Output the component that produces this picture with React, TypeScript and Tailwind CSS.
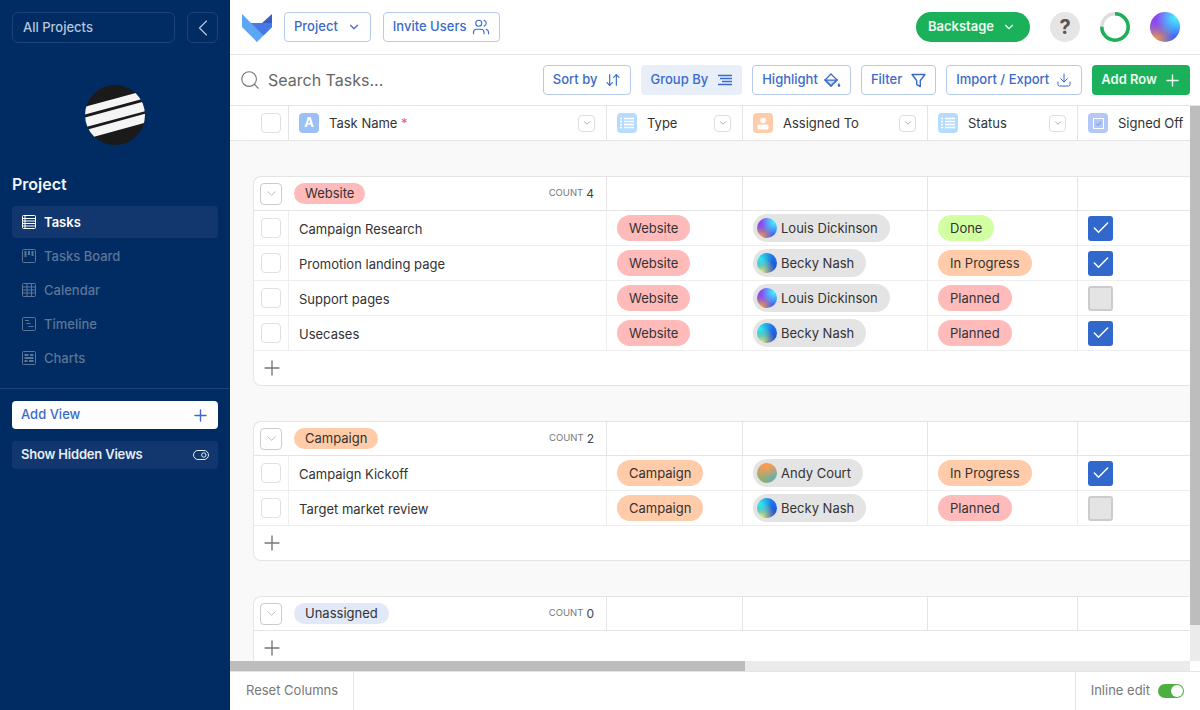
import { ChevronDown, ChevronLeft, Plus, Search, Users, ArrowDownUp, Download, Check } from "lucide-react";

const HEAD_COLS = "grid grid-cols-[59px_318px_136px_185px_150px_160px]";
const GROUP_COLS = "grid grid-cols-[35px_318px_136px_185px_150px_160px]";
const LOUIS = "bg-[radial-gradient(circle_at_85%_20%,#45f0ff_0%,transparent_55%),radial-gradient(circle_at_15%_15%,#9a3cf5_0%,transparent_60%),radial-gradient(circle_at_15%_90%,#ff9a3c_0%,transparent_55%),linear-gradient(#5a70f5,#3a5cff)]";
const BECKY = "bg-[radial-gradient(circle_at_15%_30%,#30f0e8_0%,transparent_55%),radial-gradient(circle_at_20%_95%,#e0f570_0%,transparent_60%),linear-gradient(#1f80f0,#2040c8)]";
const ANDY = "bg-[radial-gradient(circle_at_45%_5%,#ff9a50_0%,transparent_65%),radial-gradient(circle_at_90%_80%,#60b0b0_0%,transparent_60%),radial-gradient(circle_at_10%_90%,#98b060_0%,transparent_60%),linear-gradient(#d0a070,#a0a880)]";

const PILL: Record<string, string> = {
  Website: "bg-[#ffbaba]",
  Campaign: "bg-[#ffcba8]",
  Unassigned: "bg-[#e1e8f7]",
  Done: "bg-[#d3ffa3]",
  "In Progress": "bg-[#ffcba8]",
  Planned: "bg-[#ffbaba]",
};

const USERS: Record<string, string> = {
  "Louis Dickinson": LOUIS,
  "Becky Nash": BECKY,
  "Andy Court": ANDY,
};

type Row = { name: string; type: string; user: string; status: string; signed: boolean };

const GROUPS: { name: string; rows: Row[] }[] = [
  {
    name: "Website",
    rows: [
      { name: "Campaign Research", type: "Website", user: "Louis Dickinson", status: "Done", signed: true },
      { name: "Promotion landing page", type: "Website", user: "Becky Nash", status: "In Progress", signed: true },
      { name: "Support pages", type: "Website", user: "Louis Dickinson", status: "Planned", signed: false },
      { name: "Usecases", type: "Website", user: "Becky Nash", status: "Planned", signed: true },
    ],
  },
  {
    name: "Campaign",
    rows: [
      { name: "Campaign Kickoff", type: "Campaign", user: "Andy Court", status: "In Progress", signed: true },
      { name: "Target market review", type: "Campaign", user: "Becky Nash", status: "Planned", signed: false },
    ],
  },
  { name: "Unassigned", rows: [] },
];

function NavIcon({ kind }: { kind: string }) {
  return (
    <svg width="14" height="14" viewBox="0 0 14 14" fill="none" stroke="currentColor" strokeWidth="1" className="shrink-0">
      <rect x="0.5" y="0.5" width="13" height="13" rx="1" />
      {kind === "Tasks" && <path d="M0.5 3.5h13M0.5 6h13M0.5 8.5h13M0.5 11h13M3 0.5v13" />}
      {kind === "Tasks Board" && <path d="M3.5 2v6M7 2v4M10.5 2v5" strokeWidth="2" />}
      {kind === "Calendar" && <path d="M0.5 4h13M0.5 7h13M0.5 10h13M5 0.5v13M9.5 0.5v13" />}
      {kind === "Timeline" && <path d="M3 3.5h4M4.5 6.5h4M6.5 9.5h5" />}
      {kind === "Charts" && <path d="M2.5 4h4M8 4h3.5M2.5 7h9M2.5 10h3M7 10h4.5" strokeWidth="2" />}
    </svg>
  );
}

function Sidebar() {
  const views = ["Tasks", "Tasks Board", "Calendar", "Timeline", "Charts"];
  return (
    <aside className="flex w-[230px] shrink-0 flex-col bg-[#002c63]">
      <div className="flex gap-3 px-3 pt-3">
        <div className="flex h-[31px] flex-1 items-center rounded-md border border-[#1b4279] px-[10px] text-[13px] font-medium text-[#b9c6da]">
          All Projects
        </div>
        <div className="flex h-[31px] w-[31px] items-center justify-center rounded-md border border-[#1b4279] text-[#b9c6da]">
          <ChevronLeft size={28} strokeWidth={1} />
        </div>
      </div>
      <div className="mt-[42px] flex justify-center">
        <svg width="60" height="60" viewBox="0 0 60 60" className="block">
          <defs>
            <clipPath id="logoClip">
              <circle cx="30" cy="30" r="30" />
            </clipPath>
          </defs>
          <circle cx="30" cy="30" r="30" fill="#1a1a1a" />
          <g clipPath="url(#logoClip)" stroke="#f5f5f5">
            <path d="M-5 27L65 8" strokeWidth="7.5" />
            <path d="M-5 38.8L65 19.9" strokeWidth="9.5" />
            <path d="M-5 51L65 32" strokeWidth="8.7" />
          </g>
        </svg>
      </div>
      <h2 className="mt-[29px] px-3 text-base font-semibold leading-5 text-[#f2f5f9]">Project</h2>
      <nav className="mt-3 flex flex-col gap-[2px] px-3">
        {views.map((v, i) => (
          <div
            key={v}
            className={
              i === 0
                ? "flex h-8 items-center gap-2 rounded bg-[#11376e] px-[10px] text-[13px] font-semibold text-white"
                : "flex h-8 items-center gap-2 rounded px-[10px] text-[13px] font-medium text-[#5c7596]"
            }
          >
            <NavIcon kind={v} />
            <span className="pt-px">{v}</span>
          </div>
        ))}
      </nav>
      <div className="mt-[14px] border-t border-[#1b4279] px-3 pt-3">
        <div className="flex h-7 items-center justify-between rounded bg-white pl-[9px] pr-[8px] text-[13px] font-medium text-[#3a6bcc]">
          Add View
          <Plus size={19} strokeWidth={1.75} />
        </div>
        <div className="mt-3 flex h-7 items-center justify-between rounded bg-[#11376e] pl-[9px] pr-[9px] text-[13px] font-semibold tracking-[-0.2px] text-[#e8edf4]">
          Show Hidden Views
          <svg width="16" height="10" viewBox="0 0 16 10" fill="none" stroke="currentColor" strokeWidth="1">
            <rect x="0.5" y="0.5" width="15" height="9" rx="4.5" />
            <circle cx="10.8" cy="5" r="2.2" />
          </svg>
        </div>
      </div>
    </aside>
  );
}

function OutlineBtn({ label, icon, className = "" }: { label: string; icon: React.ReactNode; className?: string }) {
  return (
    <div className={`flex h-[30px] items-center gap-2 rounded border border-[#b6c9ef] px-[9px] text-[13px] font-medium text-[#3a6bcc] ${className}`}>
      {label}
      {icon}
    </div>
  );
}

function TopBar() {
  return (
    <header className="flex h-[55px] shrink-0 items-center border-b border-[#e4e4e4] pl-3 pr-5">
      <svg width="30" height="29" viewBox="0 0 30 29" className="mr-[12px] shrink-0">
        <path d="M0 1L15 16V29L14 28L0 14Z" fill="#5da6f5" />
        <path d="M9 10H30V14L15 29L14 28Z" fill="#5da6f5" />
        <path d="M9 10H30V14L21.5 22.5Z" fill="#4678e6" />
        <path d="M20 10L30 1V10Z" fill="#3a5fc0" />
      </svg>
      <OutlineBtn label="Project" icon={<ChevronDown size={14} strokeWidth={2} className="ml-px" />} />
      <OutlineBtn label="Invite Users" icon={<Users size={18} strokeWidth={1.5} className="-ml-[2px]" />} className="ml-3" />
      <div className="ml-auto flex h-[30px] items-center gap-2 rounded-full bg-[#1bb05a] pl-[12px] pr-[14px] text-[13px] font-semibold text-[#eefbf2]">
        Backstage
        <ChevronDown size={14} strokeWidth={2} />
      </div>
      <div className="ml-[20px] flex h-[30px] w-[30px] items-center justify-center rounded-full bg-[#e5e5e5] text-xl font-bold text-[#555555]">
        ?
      </div>
      <svg width="30" height="30" viewBox="0 0 30 30" className="ml-[20px]">
        <circle cx="15" cy="15" r="13.2" fill="none" stroke="#dddddd" strokeWidth="3.5" />
        <circle cx="15" cy="15" r="13.2" fill="none" stroke="#1bb05a" strokeWidth="3.5" strokeDasharray="62 83" transform="rotate(-90 15 15)" />
      </svg>
      <div className={`ml-[20px] h-[30px] w-[30px] rounded-full ${LOUIS}`} />
    </header>
  );
}

function Toolbar() {
  return (
    <div className="flex h-[51px] shrink-0 items-center gap-[10px] border-b border-[#e4e4e4] pl-[9px] pr-[10px]">
      <Search size={22} strokeWidth={1.25} className="mr-[-3px] text-[#777777]" />
      <span className="flex-1 text-base text-[#666666]">Search Tasks...</span>
      <OutlineBtn label="Sort by" icon={<ArrowDownUp size={16} strokeWidth={1.75} className="-ml-px" />} />
      <div className="flex h-[30px] items-center gap-[10px] rounded bg-[#e8eff9] px-[10px] text-[13px] font-medium text-[#3a6bcc]">
        Group By
        <svg width="14" height="12" viewBox="0 0 14 12" stroke="currentColor" strokeWidth="1.4">
          <path d="M0 1.5h14M2 4.5h12M4 7.5h10M0 10.5h14" />
        </svg>
      </div>
      <OutlineBtn
        label="Highlight"
        className="gap-[6px]"
        icon={
          <svg width="17" height="17" viewBox="0 0 17 17" fill="none" stroke="currentColor" strokeWidth="1.25">
            <path d="M7 2l6 6-6 6-6-6z" />
            <path d="M1 8h12L7 14z" fill="currentColor" fillOpacity="0.25" />
            <path d="M15 11c.8 1.2 1.3 1.8 1.3 2.6a1.3 1.3 0 0 1-2.6 0c0-.8.5-1.4 1.3-2.6z" fill="currentColor" stroke="none" />
          </svg>
        }
      />
      <OutlineBtn
        label="Filter"
        className="gap-[9px]"
        icon={
          <svg width="15" height="15" viewBox="0 0 15 15" fill="none" stroke="currentColor" strokeWidth="1.4">
            <path d="M1 1.5h13L9.3 7.5v6l-3.6-1.8V7.5z" strokeLinejoin="round" />
          </svg>
        }
      />
      <OutlineBtn label="Import / Export" className="gap-[7px]" icon={<Download size={16} strokeWidth={1.5} />} />
      <div className="flex h-[30px] items-center gap-[6px] rounded bg-[#1bb05a] pl-[9px] pr-[8px] text-[13px] font-semibold text-[#eefbf2]">
        Add Row
        <Plus size={19} strokeWidth={1.75} />
      </div>
    </div>
  );
}

function HeadIcon({ kind }: { kind: "text" | "list" | "user" | "check" }) {
  if (kind === "text") {
    return <div className="flex h-5 w-5 shrink-0 items-center justify-center rounded-sm bg-[#9cc0f5] text-[13px] font-bold text-white">A</div>;
  }
  if (kind === "user") {
    return (
      <div className="flex h-5 w-5 shrink-0 items-center justify-center rounded-sm bg-[#ffcba8]">
        <svg width="12" height="13" viewBox="0 0 12 13" fill="#fff">
          <circle cx="6" cy="3.5" r="2.7" />
          <rect x="0.5" y="7.5" width="11" height="5" rx="1.5" />
        </svg>
      </div>
    );
  }
  if (kind === "check") {
    return (
      <div className="flex h-5 w-5 shrink-0 items-center justify-center rounded-sm bg-[#b3c8f8]">
        <svg width="11" height="11" viewBox="0 0 11 11" fill="none" stroke="#fff" strokeWidth="1">
          <rect x="0.5" y="0.5" width="10" height="10" />
          <path d="M3 5.5l2 2 3-3.5" stroke="#6f8fd8" />
        </svg>
      </div>
    );
  }
  return (
    <div className="flex h-5 w-5 shrink-0 items-center justify-center rounded-sm bg-[#b5dcff]">
      <svg width="14" height="12" viewBox="0 0 14 12" stroke="#fff" strokeWidth="1.5">
        <path d="M0 1.5h2M4 1.5h10M0 4.5h2M4 4.5h10M0 7.5h2M4 7.5h10M0 10.5h2M4 10.5h10" />
      </svg>
    </div>
  );
}

function HeadCell({ icon, label, required }: { icon: "text" | "list" | "user" | "check"; label: string; required?: boolean }) {
  return (
    <div className="flex items-center border-r border-[#e4e4e4] pl-[10px] pr-[11px] last:border-r-0">
      <HeadIcon kind={icon} />
      <span className="ml-[10px] whitespace-nowrap pt-[2px] text-[13px] text-[#333333]">
        {label}
        {required && <span className="text-[#f05a5a]"> *</span>}
      </span>
      {icon !== "check" && (
        <div className="ml-auto flex h-[17px] w-[17px] items-center justify-center rounded border border-[#dddddd] text-[#777777]">
          <ChevronDown size={10} strokeWidth={1.5} />
        </div>
      )}
    </div>
  );
}

function Pill({ label }: { label: string }) {
  return (
    <span className={`inline-flex h-[26px] items-center rounded-full px-3 pt-px text-[13px] text-[#333333] ${PILL[label]}`}>
      {label}
    </span>
  );
}

function TaskRow({ row }: { row: Row }) {
  const cell = "flex items-center border-r border-[#eeeeee] pl-[10px]";
  return (
    <div className={`${GROUP_COLS} h-[35px] border-b border-[#eeeeee] last:border-b-[#e4e4e4]`}>
      <div className="flex items-center border-r border-[#eeeeee] pl-[7px]">
        <div className="h-5 w-5 shrink-0 rounded border border-[#e0e0e0]" />
      </div>
      <div className={`${cell} pt-[3px] text-[13px] text-[#333333]`}>{row.name}</div>
      <div className={cell}>
        <Pill label={row.type} />
      </div>
      <div className={cell}>
        <span className="inline-flex h-7 items-center gap-1 rounded-full bg-[#e4e4e4] pl-1 pr-3 text-[13px] text-[#333333]">
          <span className={`h-5 w-5 rounded-full ${USERS[row.user]}`} />
          <span className="pt-px">{row.user}</span>
        </span>
      </div>
      <div className={cell}>
        <Pill label={row.status} />
      </div>
      <div className="flex items-center pl-[10px]">
        {row.signed ? (
          <div className="flex h-[25px] w-[25px] items-center justify-center rounded-[3px] bg-[#3168cc] text-white">
            <Check size={20} strokeWidth={1.75} />
          </div>
        ) : (
          <div className="h-[25px] w-[25px] rounded-[3px] border-2 border-[#cccccc] bg-[#e4e4e4]" />
        )}
      </div>
    </div>
  );
}

function Group({ name, rows }: { name: string; rows: Row[] }) {
  return (
    <section className="ml-[23px] rounded-l-lg border-y border-l border-[#e4e4e4] bg-white">
      <div className={`${GROUP_COLS} h-[34px] border-b border-[#e4e4e4]`}>
        <div className="col-span-2 flex items-center border-r border-[#e4e4e4] pl-[6px] pr-3">
          <div className="flex h-[22px] w-[22px] shrink-0 items-center justify-center rounded border border-[#cccccc] text-[#999999]">
            <ChevronDown size={15} strokeWidth={1} />
          </div>
          <span className={`ml-3 inline-flex h-[21px] items-center rounded-full px-[11px] pt-px text-[13px] text-[#333333] ${PILL[name]}`}>{name}</span>
          <span className="ml-auto text-[9.5px] text-[#777777]">COUNT</span>
          <span className="ml-[3px] text-xs text-[#444444]">{rows.length}</span>
        </div>
        <div className="border-r border-[#e4e4e4]" />
        <div className="border-r border-[#e4e4e4]" />
        <div className="border-r border-[#e4e4e4]" />
        <div />
      </div>
      {rows.map((row) => (
        <TaskRow key={row.name} row={row} />
      ))}
      <div className="flex h-[34px] items-center pl-[6px] text-[#777777]">
        <Plus size={24} strokeWidth={1.4} />
      </div>
    </section>
  );
}

function Table() {
  return (
    <div className="flex min-h-0 flex-1 flex-col">
      <div className="flex min-h-0 flex-1">
        <div className="min-w-0 flex-1 overflow-hidden">
          <div className={`${HEAD_COLS} h-[35px] border-b border-[#e4e4e4] bg-white`}>
            <div className="flex items-center justify-end border-r border-[#e4e4e4] pr-[7px]">
              <div className="h-5 w-5 rounded border border-[#e0e0e0]" />
            </div>
            <HeadCell icon="text" label="Task Name" required />
            <HeadCell icon="list" label="Type" />
            <HeadCell icon="user" label="Assigned To" />
            <HeadCell icon="list" label="Status" />
            <HeadCell icon="check" label="Signed Off" />
          </div>
          <div className="flex flex-col gap-[35px] pt-[35px]">
            {GROUPS.map((g) => (
              <Group key={g.name} name={g.name} rows={g.rows} />
            ))}
          </div>
        </div>
        <div className="w-[10px] shrink-0 bg-[#ebebeb]">
          <div className="h-[519px] bg-[#bdbdbd]" />
        </div>
      </div>
      <div className="flex h-[10px] shrink-0">
        <div className="flex-1 bg-[#ebebeb]">
          <div className="h-full w-[515px] bg-[#bdbdbd]" />
        </div>
        <div className="w-[10px] bg-white" />
      </div>
    </div>
  );
}

function Footer() {
  return (
    <footer className="flex h-[39px] shrink-0 items-center border-t border-[#e4e4e4] text-[13px] text-[#777777]">
      <div className="flex h-full items-center border-r border-[#e4e4e4] pl-4 pr-[15px]">Reset Columns</div>
      <div className="ml-auto flex h-full items-center gap-2 border-l border-[#e4e4e4] pl-[15px] pr-4">
        Inline edit
        <div className="flex h-[14px] w-[26px] items-center justify-end rounded-full bg-[#4caf3f] px-px">
          <div className="h-3 w-3 rounded-full bg-white" />
        </div>
      </div>
    </footer>
  );
}

export default function App() {
  return (
    <div className="flex h-[710px] w-[1200px] overflow-hidden bg-[#f9f9f9] font-['Inter',sans-serif]">
      <Sidebar />
      <main className="flex min-w-0 flex-1 flex-col bg-[#f9f9f9]">
        <div className="bg-white">
          <TopBar />
          <Toolbar />
        </div>
        <Table />
        <div className="bg-white">
          <Footer />
        </div>
      </main>
    </div>
  );
}
